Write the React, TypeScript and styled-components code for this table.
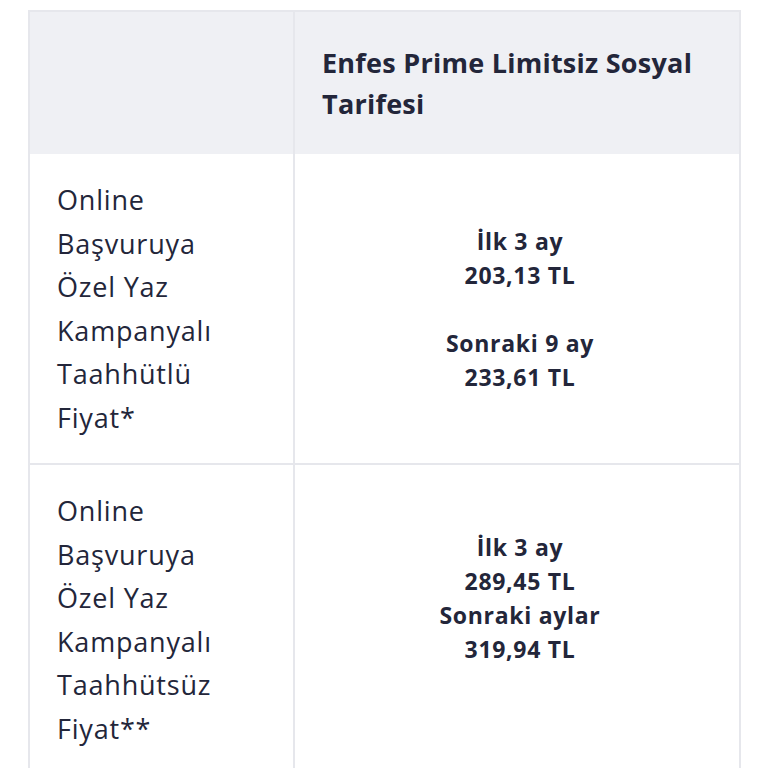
import styled, { createGlobalStyle } from "styled-components";

const GlobalStyle = createGlobalStyle`
    body {
        margin: 0;
        background: #ffffff;
        font-family: "Open Sans", "Noto Sans", sans-serif;
        color: #23263a;
    }
`;

const Page = styled.main`
    padding: 10px 0 0 28px;
`;

const Table = styled.table`
    width: 713px;
    table-layout: fixed;
    border-collapse: collapse;
    border: 2px solid #e6e7ec;
    border-bottom: none;
`;

const HeadCell = styled.th`
    background: #eff0f4;
    text-align: left;
    vertical-align: middle;
    height: 142px;
    padding: 0 10px 0 27px;
    font-size: 27px;
    letter-spacing: 0.25px;
    line-height: 41px;
    font-weight: 700;
    color: #23263a;
    border-left: 2px solid #e6e7ec;
    &:first-child {
        width: 263px;
        border-left: none;
        padding: 0;
    }
`;

const Row = styled.tr`
    border-top: 2px solid #e6e7ec;
    &:first-child {
        border-top: none;
    }
`;

const Label = styled.td`
    padding: 24px 10px 24px 27px;
    font-size: 27px;
    letter-spacing: 0.8px;
    line-height: 43.5px;
    font-weight: 400;
    vertical-align: middle;
`;

const Value = styled.td<{ $lift: number }>`
    border-left: 2px solid #e6e7ec;
    padding: 0 0 ${(p) => p.$lift}px 6px;
    text-align: center;
    vertical-align: middle;
    font-size: 23px;
    letter-spacing: 0.7px;
    line-height: 34px;
    font-weight: 700;
`;

type Plan = {
    label: string[];
    lines: string[];
    lift: number;
};

const plans: Plan[] = [
    {
        label: ["Online", "Başvuruya", "Özel Yaz", "Kampanyalı", "Taahhütlü", "Fiyat*"],
        lines: ["İlk 3 ay", "203,13 TL", "", "Sonraki 9 ay", "233,61 TL"],
        lift: 0,
    },
    {
        label: ["Online", "Başvuruya", "Özel Yaz", "Kampanyalı", "Taahhütsüz", "Fiyat**"],
        lines: ["İlk 3 ay", "289,45 TL", "Sonraki aylar", "319,94 TL"],
        lift: 44,
    },
];

export default function App() {
    return (
        <>
            <GlobalStyle />
            <Page>
                <Table>
                    <thead>
                        <tr>
                            <HeadCell />
                            <HeadCell>
                                Enfes Prime Limitsiz Sosyal
                                <br />
                                Tarifesi
                            </HeadCell>
                        </tr>
                    </thead>
                    <tbody>
                        {plans.map((p, i) => (
                            <Row key={i}>
                                <Label>
                                    {p.label.map((l, j) => (
                                        <div key={j}>{l}</div>
                                    ))}
                                </Label>
                                <Value $lift={p.lift}>
                                    {p.lines.map((l, j) => (
                                        <div key={j}>{l || "\u00a0"}</div>
                                    ))}
                                </Value>
                            </Row>
                        ))}
                    </tbody>
                </Table>
            </Page>
        </>
    );
}
